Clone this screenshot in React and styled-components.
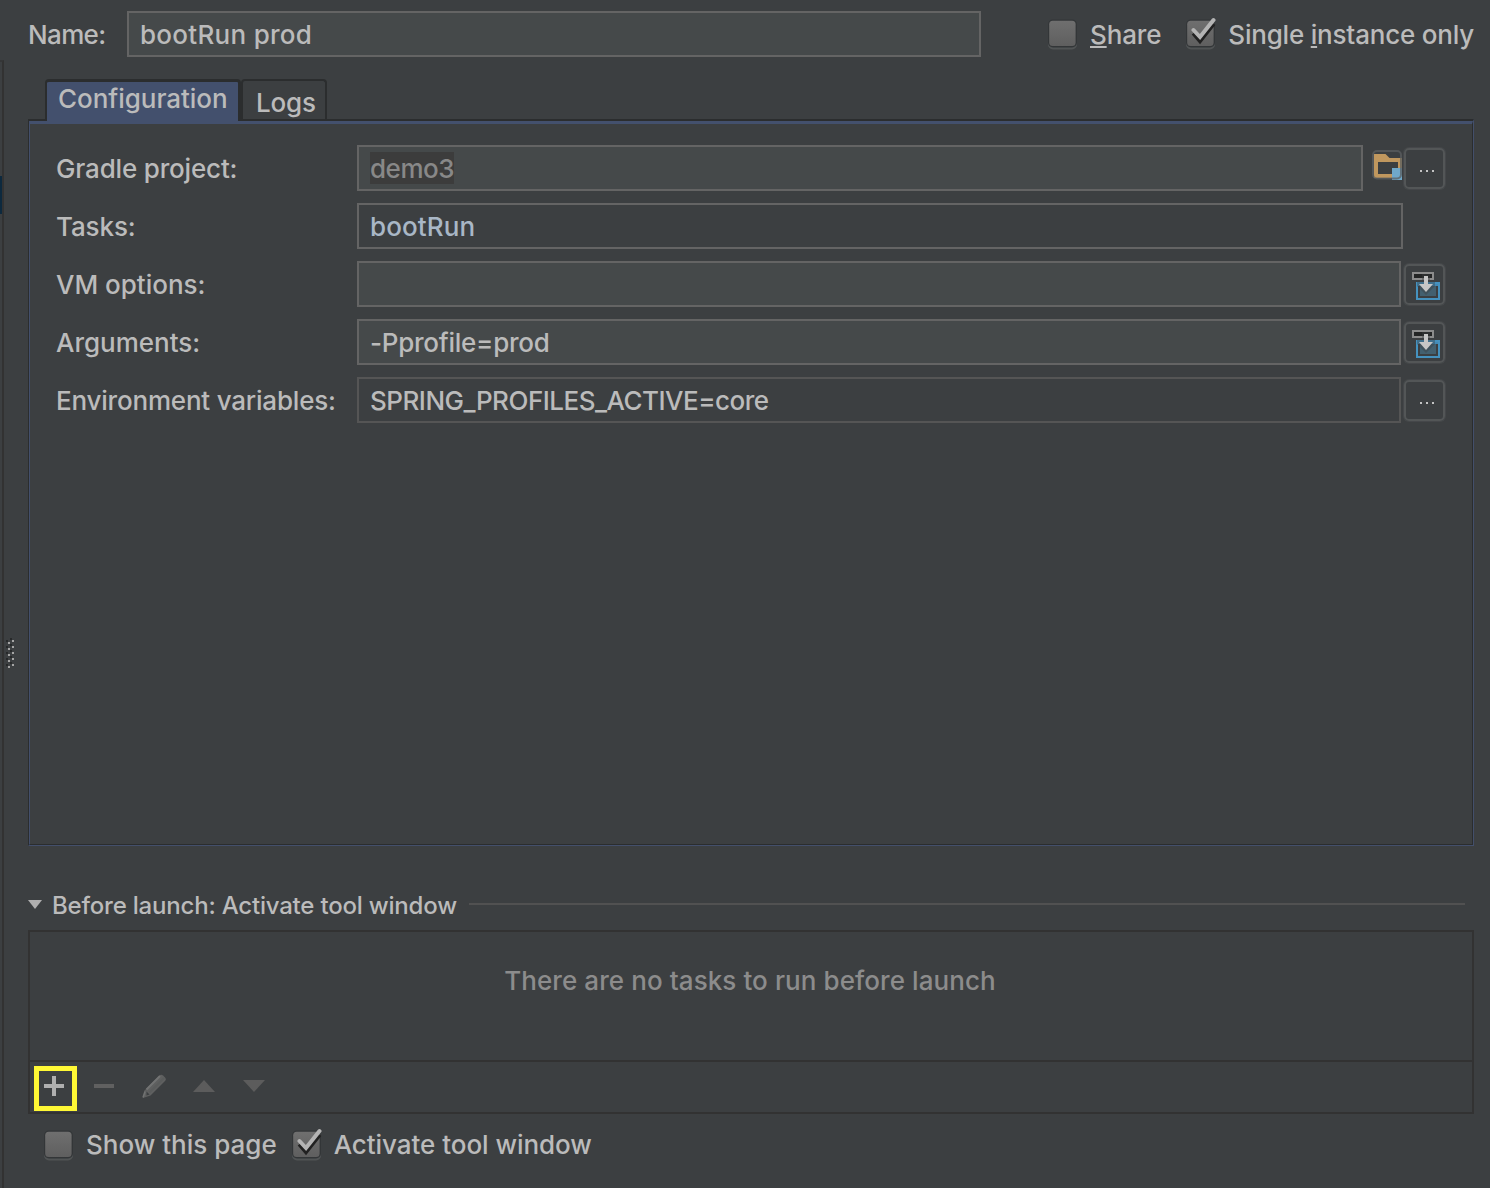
import React from "react";
import styled, { createGlobalStyle } from "styled-components";

const Global = createGlobalStyle`
  * { box-sizing: border-box; }
  body { margin: 0; background: #3c3f41; }
  svg { display: block; flex: none; }
`;

const Window = styled.div`
  display: grid;
  grid-template-columns: 4px 24px 1446px;
  width: 1490px;
  height: 1188px;
  overflow: hidden;
  background: #3c3f41;
  color: #bbbbbb;
  font: 450 26px/30px Inter, "Liberation Sans", sans-serif;
`;

const TreeEdge = styled.div`
  margin-top: 60px;
  padding-top: 116px;
  border-right: 2px solid #323232;
  border-top: 2px solid #353637;
`;

const TreeSelection = styled.div`
  width: 2px;
  height: 38px;
  margin-top: -2px;
  background: #0d293e;
`;

const Splitter = styled.div`
  padding: 638px 0 0 2px;
`;

const Content = styled.main`
  display: flex;
  flex-direction: column;
  padding-top: 11px;
`;

const Label = styled.span`
  white-space: pre;
  letter-spacing: ${(p) => p.$ls || 0}px;
`;

const Mnemonic = styled.span`
  text-decoration: underline;
  text-decoration-thickness: 2px;
  text-underline-offset: 2px;
  text-decoration-skip-ink: none;
`;

const NameRow = styled.div`
  display: flex;
  align-items: center;
  height: 46px;

  > * {
    flex: none;
  }

  ${Label} {
    padding-top: 2px;
  }
`;

const NameLabel = styled(Label)`
  width: 99px;
`;

const Field = styled.div`
  display: flex;
  align-items: center;
  width: ${(p) => p.$w}px;
  height: 46px;
  padding-left: 11px;
  border: 2px solid ${(p) => (p.$dim ? "#555555" : "#646464")};
  background: ${(p) => (p.$plain ? "transparent" : "#45494a")};
  color: ${(p) => p.$color || "#bbbbbb"};
`;

const Selected = styled(Label)`
  height: 32px;
  width: 84px;
  background: #3c3c3c;
`;

const CheckRow = styled.label`
  display: flex;
  align-items: center;
  gap: 12px;
  margin-left: ${(p) => p.$ml}px;
`;

const Tabs = styled.div`
  display: flex;
  height: 40px;
  margin-top: 22px;
  padding-left: 17px;
`;

const Tab = styled.div`
  z-index: ${(p) => (p.$active ? 1 : 0)};
  width: ${(p) => (p.$active ? 196 : 86)}px;
  height: ${(p) => (p.$active ? 42 : 40)}px;
  padding: ${(p) => (p.$active ? "2px 0 0 11px" : "7px 0 0 13px")};
  border: 2px solid #2b2d2e;
  border-right-width: ${(p) => (p.$active ? 3 : 2)}px;
  border-top-width: ${(p) => (p.$active ? 3 : 2)}px;
  border-bottom: 0;
  border-radius: 4px 4px 0 0;
  background: ${(p) => (p.$active ? "#43506d" : "transparent")};
`;

const Panel = styled.section`
  height: 727px;
  border: 1px solid #434f6b;
  border-top: 2px solid #2b2d2e;
  border-left-color: #2b2d2e;
`;

const PanelBody = styled.div`
  display: flex;
  flex-direction: column;
  gap: 12px;
  height: 100%;
  padding: 21px 0 0 26px;
  border: 1px solid #2b2d2e;
  border-top: 3px solid #43506d;
  border-left-color: #434f6b;
`;

const FormRow = styled.div`
  display: grid;
  grid-template-columns: 301px 1046px 43px;
  align-items: center;
  height: 46px;

  ${Label} {
    padding-top: 2px;
  }
`;

const Inputs = styled.div`
  display: flex;
  gap: 9px;
`;

const ToolButton = styled.button`
  width: 41px;
  height: 41px;
  margin: 1px 0 0 1px;
  padding: 0;
  border: 2px solid #535657;
  border-radius: 5px;
  background: transparent;
  box-shadow: 0 0 0 1px rgba(83, 86, 87, 0.4);
`;

const SectionHeader = styled.div`
  display: flex;
  align-items: center;
  height: 30px;
  margin-top: 44px;
  font-size: 24px;
`;

const SectionTitle = styled(Label)`
  margin: 0 0 0 10px;
  width: 417px;
  padding-top: 2px;
`;

const Rule = styled.div`
  width: 996px;
  height: 2px;
  margin-top: -2px;
  background: #515151;
`;

const TaskBox = styled.section`
  height: 184px;
  margin-top: 10px;
  border: 2px solid #323232;
`;

const EmptyList = styled.div`
  height: 130px;
  padding: 34px 2px 0 0;
  border-bottom: 2px solid #323232;
  text-align: center;
  color: #8c8c8c;
`;

const Toolbar = styled.div`
  display: flex;
  align-items: flex-start;
  gap: 26px;
  padding: 4px 0 0 4px;
`;

const AddButton = styled.button`
  display: flex;
  width: 43px;
  height: 45px;
  margin-right: -11px;
  padding: 5px;
  border: 5px solid #fff835;
  background: transparent;
`;

const ToolIcon = styled.svg`
  margin-top: 8px;
`;

const Footer = styled.div`
  display: flex;
  padding-top: 13px;
`;

function Check({ checked }) {
  return (
    <svg width="30" height="36" viewBox="0 0 30 36">
      <defs>
        <linearGradient id="box" x1="0" y1="0" x2="0" y2="1">
          <stop offset="0" stopColor="#6f6f6f" />
          <stop offset="1" stopColor="#5f5f5f" />
        </linearGradient>
      </defs>
      <rect x="0" y="5" width="29" height="28.500" rx="5" fill="#515455" />
      <rect x="0" y="3.500" width="29" height="28" rx="5" fill="#333638" />
      <rect x="1.200" y="4.700" width="26.400" height="25.300" rx="3.500" fill="url(#box)" />
      {checked && (
        <g fill="none">
          <path d="M7 17.500L14 25.500L28 8" stroke="#212121" strokeWidth="3.400" />
          <path d="M7.500 14L14 21L27.500 4" stroke="#b4b4b4" strokeWidth="4" strokeLinecap="round" />
        </g>
      )}
    </svg>
  );
}

function Dots() {
  return (
    <svg width="37" height="37" viewBox="2 2 37 37" fill="#c4c4c4">
      <rect x="16" y="22" width="2" height="2" />
      <rect x="22" y="22" width="2" height="2" />
      <rect x="28" y="22" width="2" height="2" />
    </svg>
  );
}

function ExpandIcon() {
  return (
    <svg width="37" height="37" viewBox="2 2 37 37">
      <rect x="9" y="9" width="20" height="6" fill="#242525" stroke="#8c8c8c" strokeWidth="2" />
      <rect x="13" y="19" width="22" height="16" fill="#3c3f41" stroke="#4592bf" strokeWidth="2" />
      <path d="M14 20h20v2H14z" fill="#4389b4" />
      <rect x="16" y="22" width="16" height="10" fill="#43606f" />
      <path d="M18 10h8v8h5v4l-9 9-9-9v-4h5z" fill="#3c3f41" opacity=".4" />
      <path d="M20 12h4v8h5l-7 8-7-8h5z" fill="#c6c6c6" />
    </svg>
  );
}

function ModuleFolder() {
  return (
    <svg width="30" height="46" viewBox="0 -5 30 46">
      <path d="M2 4h11.500l4 4H30v20H2zM6 12v12h20V12z" fill="#c0975e" fillRule="evenodd" />
      <rect x="20" y="18" width="10" height="12" fill="#70a8c9" />
      <rect x="1" y="1" width="28" height="27.500" rx="4" fill="none" stroke="#5b5f60" strokeWidth="2" opacity=".75" />
    </svg>
  );
}

function Grip() {
  return (
    <svg width="8" height="32" viewBox="0 0 8 32">
      {[0, 6, 12, 18, 24].map((y) => (
        <g key={y}>
          <path d={`M4 ${y}h2v2h-2zM0 ${y + 2}h2v2h-2z`} fill="#27292a" />
          <path d={`M6 ${y + 2}h2v2h-2zM2 ${y + 4}h2v2h-2z`} fill="#a5a5a5" />
        </g>
      ))}
    </svg>
  );
}

export default function App() {
  return (
    <Window>
      <Global />
      <TreeEdge><TreeSelection /></TreeEdge>
      <Splitter><Grip /></Splitter>
      <Content>
        <NameRow>
          <NameLabel $ls={-0.65}>Name:</NameLabel>
          <Field $w={854}><Label $ls={0.28}>bootRun prod</Label></Field>
          <CheckRow $ml={67}>
            <Check />
            <Label $ls={-0.15}><Mnemonic>S</Mnemonic>hare</Label>
          </CheckRow>
          <CheckRow $ml={25}>
            <Check checked />
            <Label $ls={-0.2}>Single <Mnemonic>i</Mnemonic>nstance only</Label>
          </CheckRow>
        </NameRow>

        <Tabs>
          <Tab $active><Label $ls={-0.04}>Configuration</Label></Tab>
          <Tab><Label $ls={-0.2}>Logs</Label></Tab>
        </Tabs>
        <Panel>
          <PanelBody>
            <FormRow>
              <Label $ls={-0.17}>Gradle project:</Label>
              <Inputs>
                <Field $w={1006} $color="#888888"><Selected $ls={-0.45}>demo3</Selected></Field>
                <ModuleFolder />
              </Inputs>
              <ToolButton><Dots /></ToolButton>
            </FormRow>
            <FormRow>
              <Label $ls={-0.12}>Tasks:</Label>
              <Field $w={1046} $plain $color="#a9b7c6"><Label $ls={0.12}>bootRun</Label></Field>
            </FormRow>
            <FormRow>
              <Label $ls={0}>VM options:</Label>
              <Field $w={1044} />
              <ToolButton><ExpandIcon /></ToolButton>
            </FormRow>
            <FormRow>
              <Label $ls={0}>Arguments:</Label>
              <Field $w={1044}><Label $ls={-0.25}>-Pprofile=prod</Label></Field>
              <ToolButton><ExpandIcon /></ToolButton>
            </FormRow>
            <FormRow>
              <Label $ls={-0.2}>Environment variables:</Label>
              <Field $w={1044} $plain $dim><Label $ls={-0.5}>SPRING_PROFILES_ACTIVE=core</Label></Field>
              <ToolButton><Dots /></ToolButton>
            </FormRow>
          </PanelBody>
        </Panel>

        <SectionHeader>
          <svg width="14" height="11" viewBox="0 0 14 11"><path d="M0 0h14L7 9z" fill="#afafaf" /></svg>
          <SectionTitle $ls={-0.2}>Before launch: Activate tool window</SectionTitle>
          <Rule />
        </SectionHeader>
        <TaskBox>
          <EmptyList><Label $ls={0.08}>There are no tasks to run before launch</Label></EmptyList>
          <Toolbar>
            <AddButton>
              <svg width="20" height="20" viewBox="0 0 20 20"><path d="M8 0h4v8h8v4h-8v8H8v-8H0V8h8z" fill="#afafaf" /></svg>
            </AddButton>
            <ToolIcon width="24" height="24"><path d="M2 10h20v4H2z" fill="#606060" /></ToolIcon>
            <ToolIcon width="24" height="24">
              <path d="M2.500 16.500L17 2Q19 0 21 1.500L23 3.500Q24.500 5 23 7L8.500 21.500L1 24z" fill="#5f6060" />
              <path d="M4.500 15.500L18 2" stroke="#727373" strokeWidth="2" />
              <path d="M7.500 18.500L22 4" stroke="#5a5c5c" strokeWidth="2" />
              <path d="M4.500 17.500l3 3-3 1z" fill="#3c3f41" />
              <path d="M3 17.500L1 23.500" stroke="#727373" strokeWidth="1.500" fill="none" />
            </ToolIcon>
            <ToolIcon width="24" height="24"><path d="M1 18h22L12 6z" fill="#5c5c5c" /></ToolIcon>
            <ToolIcon width="24" height="24"><path d="M1 6h22L12 18z" fill="#5c5c5c" /></ToolIcon>
          </Toolbar>
        </TaskBox>
        <Footer>
          <CheckRow $ml={16}>
            <Check />
            <Label $ls={0}>Show this page</Label>
          </CheckRow>
          <CheckRow $ml={15}>
            <Check checked />
            <Label $ls={-0.05}>Activate tool window</Label>
          </CheckRow>
        </Footer>
      </Content>
    </Window>
  );
}
